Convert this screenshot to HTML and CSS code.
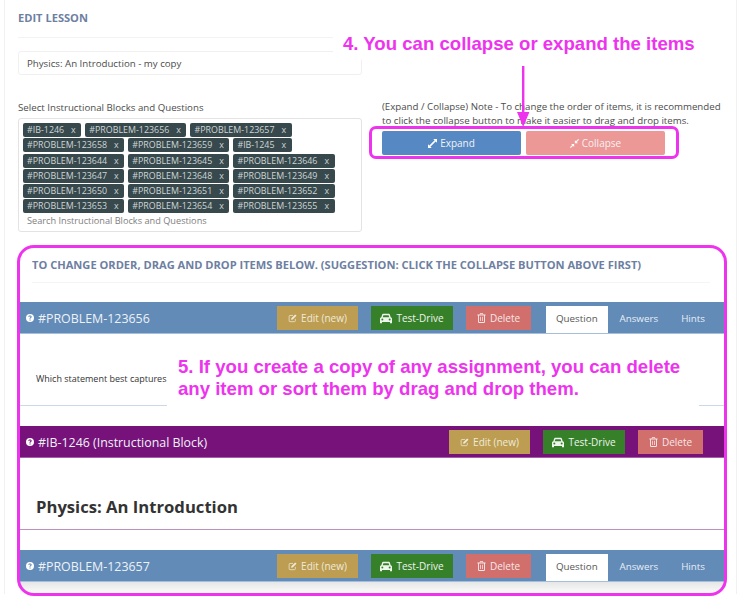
FILE: index.html
```html
<!DOCTYPE html>
<html lang="en">
<head>
<meta charset="utf-8">
<title>Edit Lesson</title>
<link rel="stylesheet" href="styles.css">
</head>
<body>
<svg class="defs" width="0" height="0" aria-hidden="true">
  <symbol id="i-help" viewBox="0 0 16 16"><path fill-rule="evenodd" d="M8 0a8 8 0 1 1 0 16A8 8 0 0 1 8 0zM7 11v2.200h2.200V11zM8 2.800c-2 0-3.300 1-3.500 2.900l2.100.3c.1-.9.5-1.300 1.300-1.300.7 0 1.200.4 1.200 1 0 .5-.3.8-1 1.300-.9.600-1.200 1.200-1.200 2.100v.4h2.200v-.3c0-.4.2-.6.8-1 1-.7 1.500-1.400 1.500-2.600 0-1.700-1.300-2.800-3.400-2.800z"/></symbol>
  <symbol id="i-edit" viewBox="0 0 16 16"><path fill="none" stroke="currentColor" stroke-width="1.300" d="M13 9.500V13a1.500 1.500 0 0 1-1.500 1.500h-8A1.500 1.500 0 0 1 2 13V5a1.500 1.500 0 0 1 1.500-1.500H9"/><path d="M6 8.500 12.800 1.700l2.300 2.300L8.300 10.800 5.500 11.300z"/></symbol>
  <symbol id="i-car" viewBox="0 0 18 16"><path fill-rule="evenodd" d="M4.800 1h8.400c.8 0 1.400.5 1.700 1.200L16 6c1.100.3 2 1.200 2 2.400V15h-3v-1.800H3V15H0V8.400C0 7.200.9 6.300 2 6l1.100-3.800C3.400 1.500 4 1 4.800 1zM5.100 3 4.100 6h9.800l-1-3zM3.500 8a1.500 1.500 0 1 0 0 3 1.500 1.500 0 0 0 0-3zm11 0a1.500 1.500 0 1 0 0 3 1.500 1.500 0 0 0 0-3z"/></symbol>
  <symbol id="i-trash" viewBox="0 0 14 16"><path fill-rule="evenodd" d="M5 0h4l1 2.200h3.500v1.600h-1V14a2 2 0 0 1-2 2h-7a2 2 0 0 1-2-2V3.800h-1V2.200H4zM5.400 1.300l-.3.900h3.800l-.3-.9zM3 3.800V14c0 .3.200.5.500.5h7c.3 0 .5-.2.500-.5V3.800zM4.600 5.800h1.200v7H4.600zm3.600 0h1.200v7H8.200z"/></symbol>
  <symbol id="i-expand" viewBox="0 0 12 12"><path d="M7 0h5v5L10.200 3.200 3.200 10.200 5 12H0V7l1.800 1.800 7-7z"/></symbol>
  <symbol id="i-compress" viewBox="0 0 12 12"><path d="M11 0 12 1 9 4l1.500 1.500H6.500v-4L8 3zM1.500 6.500h4v4L4 9l-3 3-1-1 3-3z"/></symbol>
</svg>

<main class="page">
  <header class="page-head">
    <h1 class="page-title">EDIT LESSON</h1>
  </header>
  <div class="name-field">Physics: An Introduction - my copy</div>

  <section class="setup">
    <div>
      <p class="select-label">Select Instructional Blocks and Questions</p>
      <div class="tag-box">
        <div class="tags">
          <span class="tag">#IB-1246<i>x</i></span>
          <span class="tag">#PROBLEM-123656<i>x</i></span>
          <span class="tag">#PROBLEM-123657<i>x</i></span>
          <span class="tag">#PROBLEM-123658<i>x</i></span>
          <span class="tag">#PROBLEM-123659<i>x</i></span>
          <span class="tag">#IB-1245<i>x</i></span>
          <span class="tag">#PROBLEM-123644<i>x</i></span>
          <span class="tag">#PROBLEM-123645<i>x</i></span>
          <span class="tag">#PROBLEM-123646<i>x</i></span>
          <span class="tag">#PROBLEM-123647<i>x</i></span>
          <span class="tag">#PROBLEM-123648<i>x</i></span>
          <span class="tag">#PROBLEM-123649<i>x</i></span>
          <span class="tag">#PROBLEM-123650<i>x</i></span>
          <span class="tag">#PROBLEM-123651<i>x</i></span>
          <span class="tag">#PROBLEM-123652<i>x</i></span>
          <span class="tag">#PROBLEM-123653<i>x</i></span>
          <span class="tag">#PROBLEM-123654<i>x</i></span>
          <span class="tag">#PROBLEM-123655<i>x</i></span>
        </div>
        <div class="tag-search">Search Instructional Blocks and Questions</div>
      </div>
    </div>
    <div class="side">
      <p class="note">(Expand / Collapse) Note - To change the order of items, it is recommended to click the collapse button to make it easier to drag and drop items.</p>
      <div class="side-buttons">
        <button class="wide-btn expand"><svg class="ico-s"><use href="#i-expand"/></svg>Expand</button>
        <button class="wide-btn collapse"><svg class="ico-s"><use href="#i-compress"/></svg>Collapse</button>
      </div>
    </div>
  </section>

  <h2 class="order-title">TO CHANGE ORDER, DRAG AND DROP ITEMS BELOW. (SUGGESTION: CLICK THE COLLAPSE BUTTON ABOVE FIRST)</h2>

  <section class="items">
    <article class="item problem">
      <div class="bar">
        <h3 class="bar-title"><svg class="ico-help"><use href="#i-help"/></svg>#PROBLEM-123656</h3>
        <a class="btn edit"><svg class="ico"><use href="#i-edit"/></svg>Edit (new)</a>
        <a class="btn drive"><svg class="ico ico-car"><use href="#i-car"/></svg>Test-Drive</a>
        <a class="btn del"><svg class="ico"><use href="#i-trash"/></svg>Delete</a>
        <nav class="tabs"><a class="tab active">Question</a><a class="tab">Answers</a><a class="tab">Hints</a></nav>
      </div>
      <div class="body"><p class="question">Which statement best captures</p></div>
    </article>

    <article class="item block">
      <div class="bar">
        <h3 class="bar-title"><svg class="ico-help"><use href="#i-help"/></svg>#IB-1246 (Instructional Block)</h3>
        <a class="btn edit"><svg class="ico"><use href="#i-edit"/></svg>Edit (new)</a>
        <a class="btn drive"><svg class="ico ico-car"><use href="#i-car"/></svg>Test-Drive</a>
        <a class="btn del"><svg class="ico"><use href="#i-trash"/></svg>Delete</a>
      </div>
      <div class="body"><p class="block-heading">Physics: An Introduction</p></div>
    </article>

    <article class="item problem last">
      <div class="bar">
        <h3 class="bar-title"><svg class="ico-help"><use href="#i-help"/></svg>#PROBLEM-123657</h3>
        <a class="btn edit"><svg class="ico"><use href="#i-edit"/></svg>Edit (new)</a>
        <a class="btn drive"><svg class="ico ico-car"><use href="#i-car"/></svg>Test-Drive</a>
        <a class="btn del"><svg class="ico"><use href="#i-trash"/></svg>Delete</a>
        <nav class="tabs"><a class="tab active">Question</a><a class="tab">Answers</a><a class="tab">Hints</a></nav>
      </div>
    </article>
  </section>
</main>

<div class="callout callout-4">4. You can collapse or expand the items</div>
<svg class="arrow" width="16" height="62" viewBox="0 0 16 62"><path d="M7 0h2.400v46h5L8.200 61 2 46h5z"/></svg>
<div class="ring ring-buttons"></div>
<div class="callout callout-5">5. If you create a copy of any assignment, you can delete<br>any item or sort them by drag and drop them.</div>
<div class="ring ring-items"></div>
</body>
</html>
```
FILE: styles.css
```css
* { box-sizing: border-box; }
html, body { margin: 0; height: 600px; overflow: hidden; background: #fff; }
body { position: relative; font-family: "Open Sans", sans-serif; color: #444; font-size: 9.700px; }
.defs { position: absolute; }
h1, h2, h3, p { margin: 0; }

.page {
  margin-left: 4px; width: 733px; height: 594px; padding-left: 13px;
  border-left: 1px solid #f1f1f1; border-right: 1px solid #f1f1f1;
}
.page-head { height: 38px; padding-top: 12px; border-bottom: 1px solid #f3f3f3; width: 700px; }
.page-title { font-size: 11.100px; line-height: 12px; font-weight: 700; color: #6d80a2; }
.name-field {
  margin-top: 13px; width: 344px; height: 24px; padding-left: 8px; line-height: 23px;
  border: 1px solid #f0f0f0; border-radius: 3px; color: #4c4c4c;
}

.setup { display: grid; grid-template-columns: 344px 345px; column-gap: 20px; }
.select-label { margin-top: 27px; line-height: 12px; color: #4c4c4c; }
.tag-box { margin-top: 4px; height: 114px; padding: 4px 4px 0; border: 1px solid #e3e3e3; border-radius: 3px; }
.tags { display: flex; flex-wrap: wrap; column-gap: 4px; row-gap: 1.300px; }
.tag {
  display: flex; height: 14px; padding: 0 4px; line-height: 13px;
  background: #37494d; color: #cfd6d6; border-radius: 2px; font-size: 8.900px;
}
.tag i { font-style: normal; margin-left: 7px; margin-right: 1.500px; }
.tag-search { margin: 2px 0 0 4px; line-height: 12px; font-size: 9.200px; color: #808080; }

.side { padding-top: 25px; }
.note { line-height: 14px; color: #4c4c4c; }
.side-buttons { display: flex; gap: 5px; margin-top: 3px; }
.wide-btn {
  display: flex; align-items: center; justify-content: center; gap: 3px; width: 139px; height: 24px; padding: 0;
  border: 0; border-radius: 2px; color: #f3f3f3; font: 10px "Open Sans", sans-serif;
}
.expand { background: #5688c3; }
.collapse { background: #ec9897; }
.ico-s { width: 9px; height: 9px; fill: #fff; }

.order-title { margin-top: 27px; margin-left: 14px; width: 678px; height: 24px; line-height: 12px; font-size: 11.100px; font-weight: 700; color: #6d80a2; border-bottom: 1px solid #f5f5f5; }

.items { margin: 19px 0 0 2px; width: 704px; display: flex; flex-direction: column; gap: 20px; }
.bar { display: flex; align-items: flex-start; height: 32px; padding: 4px 7.500px 0 6px; color: #fff; }
.problem .bar { background: #628bb8; border-bottom: 1px solid #a4bedb; }
.block .bar { background: #76127a; padding-right: 21px; border-bottom: 1px solid #a65da8; }
.bar-title { display: flex; align-items: center; gap: 4px; height: 24px; margin-right: auto; font-size: 12.400px; font-weight: 400; color: #eef2f7; }
.ico-help { width: 8px; height: 8px; fill: #fff; }
.btn { display: flex; align-items: center; justify-content: center; gap: 4px; height: 24px; font-size: 10px; color: #f0ead9; }
.edit { width: 81px; background: #bc9d52; }
.drive { width: 82px; margin-left: 13px; background: #37802a; color: #eef5ec; }
.del { width: 65px; margin-left: 13px; background: #d06f6c; color: #f8e8e8; }
.ico { width: 9px; height: 10px; fill: currentColor; }
.ico-car { width: 12px; height: 11px; }
.tabs { display: flex; margin-left: 15px; }
.tab { height: 27px; padding: 0 11.500px; line-height: 26px; font-size: 9.800px; color: #e8eef5; }
.tab.active { padding: 0 10px; width: 62px; background: #fff; color: #555; }
.body { height: 72px; padding-top: 39px; }
.problem .body { border-bottom: 1px solid #cbd8e8; }
.block .body { padding-top: 37px; border-bottom: 1px solid #c08fc0; }
.question { margin-left: 16px; line-height: 12px; font-size: 9px; color: #333; }
.block-heading { margin-left: 16px; line-height: 24px; font-size: 16.650px; font-weight: 700; color: #333; }
.last::after { content: ""; display: block; height: 13px; background: linear-gradient(#e6e6e6, #fff); }

.callout { position: absolute; background: #fff; font: 700 18.600px/22px "Liberation Sans", Arial, sans-serif; color: #ee33ee; }
.callout-4 { left: 333px; top: 30px; width: 390px; height: 30px; padding: 3px 0 0 10px; }
.callout-5 { left: 167px; top: 350px; width: 532px; height: 56px; padding: 6px 0 0 11px; }
.arrow { position: absolute; left: 515px; top: 66px; fill: #ee33ee; }
.ring { position: absolute; border: 3px solid #ee33ee; }
.ring-buttons { left: 369px; top: 126px; width: 310px; height: 33px; border-radius: 7px; }
.ring-items { left: 17px; top: 245px; width: 710px; height: 351px; border-radius: 17px; }
```
